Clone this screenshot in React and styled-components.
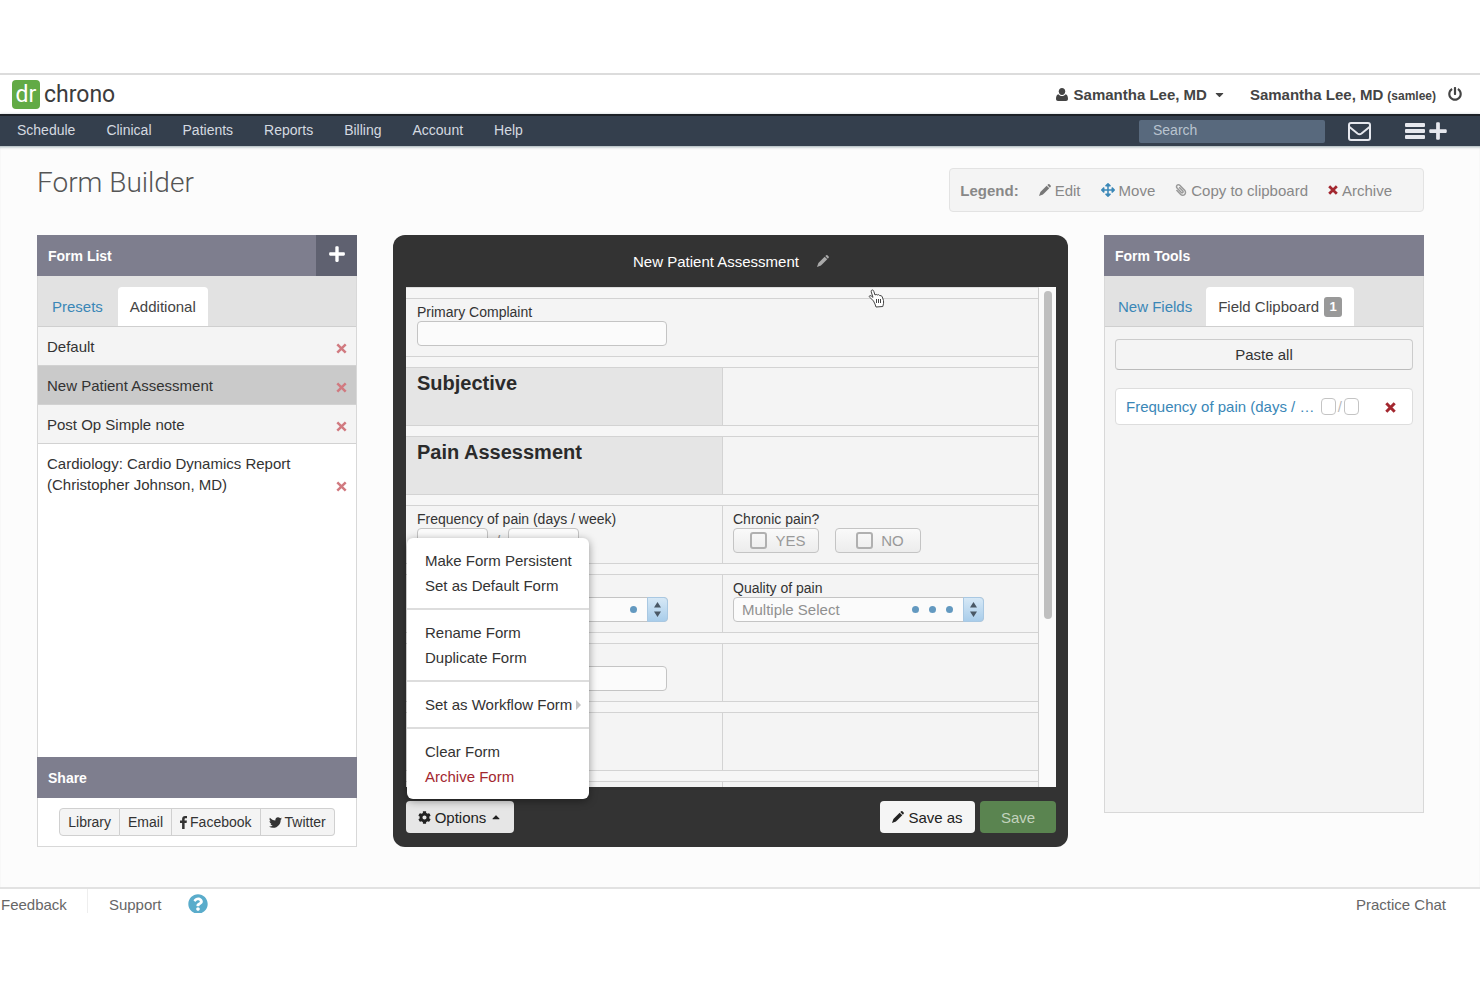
import React from 'react'
import styled, { createGlobalStyle, css } from 'styled-components'
import {
  FaArrowsAlt,
  FaCaretDown,
  FaCaretUp,
  FaCog,
  FaPaperclip,
  FaPlus,
  FaPowerOff,
  FaQuestionCircle,
  FaTwitter,
} from 'react-icons/fa'

const colors = {
  navy: '#343f4d',
  slate: '#7e7e8e',
  slateDark: '#5f6170',
  link: '#3a87b7',
  text: '#333333',
  muted: '#888888',
  danger: '#a3272f',
  green: '#5a8450',
  border: '#d8d8d8',
  light: '#f4f4f4',
}

const GlobalStyle = createGlobalStyle`
  * {
    box-sizing: border-box;
  }
  body {
    margin: 0;
    background: #ffffff;
    color: ${colors.text};
    font-family: 'Liberation Sans', Arial, sans-serif;
    font-size: 15px;
  }
  button, input, select {
    font-family: inherit;
    font-size: inherit;
    color: inherit;
    margin: 0;
  }
  a {
    color: inherit;
    text-decoration: none;
  }
`

const Page = styled.div`
  padding-top: 73px;
`

/* ---------- top bars ---------- */

const Header = styled.header`
  display: flex;
  align-items: center;
  justify-content: space-between;
  height: 41px;
  padding: 0 18px 0 12px;
  border-top: 2px solid #dcdcdc;
`

const Logo = styled.a`
  display: flex;
  align-items: center;
  gap: 4px;
  font-family: Roboto, sans-serif;
  font-size: 23px;
  line-height: 29px;
  color: #3c3c3c;
`

const LogoMark = styled.span`
  width: 28px;
  height: 29px;
  border-radius: 4px;
  background: #62aa45;
  color: #ffffff;
  text-align: center;
`

const UserArea = styled.div`
  display: flex;
  align-items: center;
  padding-bottom: 1px;
  font-weight: bold;
  color: #444444;
  gap: 24px;
`

const UserButton = styled.button`
  display: flex;
  align-items: center;
  gap: 6px;
  padding: 0;
  border: 0;
  background: none;
  font-weight: bold;
`

const UserName = styled.a`
  display: flex;
  align-items: baseline;
  gap: 4px;

  small {
    font-size: 12px;
  }
`

const PowerButton = styled.button`
  display: flex;
  margin-left: -12px;
  padding: 0;
  border: 0;
  background: none;
`

const Nav = styled.nav`
  display: flex;
  align-items: center;
  height: 32px;
  padding: 0 32px 0 17px;
  border-top: 2px solid #1d2127;
  background: ${colors.navy};
  box-shadow: 0 1px 3px rgba(60, 90, 100, 0.6);
  color: #d5dae0;
  font-size: 14px;
`

const NavLinks = styled.div`
  display: flex;
  flex: 1;
  gap: 31px;
  padding-bottom: 2px;
`

const Search = styled.input`
  width: 186px;
  height: 23px;
  padding: 0 14px 2px;
  border: 0;
  border-radius: 2px;
  background: #58697d;

  &::placeholder {
    color: #b9c4d0;
    opacity: 1;
  }
`

const NavIcon = styled.button`
  display: flex;
  align-items: center;
  gap: 3px;
  margin-left: ${({ $space }) => $space}px;
  padding: 0;
  border: 0;
  background: none;
  color: #e6e8ee;
`

/* ---------- page heading ---------- */

const Main = styled.main`
  position: relative;
  padding: 22px 56px 40px 37px;
  background: #fcfcfc;
  box-shadow: inset 0 3px 3px -2px rgba(60, 90, 100, 0.5);
`

const TitleRow = styled.div`
  display: flex;
  align-items: flex-start;
  justify-content: space-between;
  margin-bottom: 23px;
`

const Title = styled.h1`
  margin: 0;
  font-family: Roboto, sans-serif;
  font-size: 28px;
  font-weight: 300;
  line-height: 30px;
  color: #555555;
`

const Legend = styled.div`
  display: flex;
  align-items: center;
  gap: 20px;
  height: 44px;
  padding: 0 31px 0 10px;
  border: 1px solid #e3e3e3;
  border-radius: 4px;
  background: ${colors.light};
  color: ${colors.muted};
`

const LegendItem = styled.span`
  display: flex;
  align-items: center;
  gap: 4px;

  svg {
    color: ${({ $color }) => $color};
  }
`

const MirroredClip = styled(FaPaperclip)`
  transform: scaleX(-1);
`

/* ---------- panels ---------- */

const Columns = styled.div`
  display: grid;
  grid-template-columns: 320px 1fr 320px;
  gap: 36px;
  align-items: start;
`

const Panel = styled.section`
  display: flex;
  flex-direction: column;
  min-height: ${({ $height }) => $height}px;
  border: 1px solid ${colors.border};
  border-top: 0;
  background: ${({ $fill }) => $fill};
`

const PanelHeader = styled.div`
  display: flex;
  align-items: stretch;
  justify-content: space-between;
  height: 41px;
  margin: 0 -1px;
  padding-left: 11px;
  background: ${colors.slate};
  color: #ffffff;
`

const PanelTitle = styled.h2`
  margin: 0;
  font-size: 14px;
  line-height: 42px;
`

const AddButton = styled.button`
  display: flex;
  align-items: center;
  justify-content: center;
  width: 41px;
  padding: 0 0 3px;
  border: 0;
  background: ${colors.slateDark};
`

const Tabs = styled.div`
  display: flex;
  align-items: flex-end;
  gap: ${({ $gap }) => $gap}px;
  height: 51px;
  padding-left: ${({ $gap }) => $gap - 1}px;
  border-bottom: 1px solid #cfcfcf;
  background: #e2e2e2;
`

const Tab = styled.button`
  display: flex;
  align-items: center;
  gap: 5px;
  height: 39px;
  padding: 0 12px;
  border: 0;
  border-radius: 4px 4px 0 0;
  background: ${({ $active }) => ($active ? '#ffffff' : 'transparent')};
  color: ${({ $active }) => ($active ? '#444444' : colors.link)};
`

const Badge = styled.span`
  width: 18px;
  border-radius: 3px;
  background: #999999;
  color: #ffffff;
  font-size: 13px;
  font-weight: bold;
  line-height: 20px;
`

const FormItems = styled.ul`
  flex: 1;
  margin: 0;
  padding: 0;
  list-style: none;
`

const FormItem = styled.li`
  display: flex;
  align-items: flex-end;
  justify-content: space-between;
  padding: 9px 9px 8px;
  border-bottom: 1px solid ${({ $plain }) => ($plain ? 'transparent' : '#d2d2d2')};
  background: ${({ $selected, $plain }) =>
    $selected ? '#cacaca' : $plain ? '#ffffff' : colors.light};
  line-height: 21px;
`

const FormLink = styled.a`
  max-width: 260px;
`

const RemoveButton = styled.button`
  display: flex;
  padding: ${({ $strong }) => ($strong ? '2px 0 0' : '0 0 3px')};
  border: 0;
  background: none;
  color: ${({ $strong }) => ($strong ? colors.danger : '#d17a80')};
`

const ShareBody = styled.div`
  display: flex;
  justify-content: center;
  padding: 10px 0;
`

const ShareButton = styled.button`
  display: flex;
  align-items: center;
  gap: 3px;
  height: 28px;
  padding: 0 8px;
  border: 1px solid #d0d0d0;
  border-left-width: 0;
  background: ${colors.light};
  font-size: 14px;

  &:first-child {
    border-left-width: 1px;
    border-radius: 4px 0 0 4px;
  }
  &:last-child {
    border-radius: 0 4px 4px 0;
  }
`

const ToolsBody = styled.div`
  display: flex;
  flex-direction: column;
  gap: 18px;
  padding: 12px 10px;
`

const PasteButton = styled.button`
  height: 31px;
  border: 1px solid #cccccc;
  border-bottom-color: #bbbbbb;
  border-radius: 4px;
  background: ${colors.light};
`

const ClipItem = styled.div`
  display: flex;
  align-items: center;
  height: 37px;
  padding: 0 16px 0 10px;
  border: 1px solid #dddddd;
  border-radius: 4px;
  background: #ffffff;
  color: ${colors.link};

  a {
    flex: 1;
    white-space: nowrap;
  }
`

const ClipPreview = styled.span`
  display: flex;
  align-items: center;
  gap: 2px;
  margin-right: 26px;
  color: #bbbbbb;

  i {
    width: 15px;
    height: 17px;
    border: 1px solid #c4c4c4;
    border-radius: 4px;
  }
`

/* ---------- form editor ---------- */

const Editor = styled.section`
  position: relative;
  padding: 0 12px 14px 13px;
  border-radius: 12px;
  background: #333333;
`

const EditorTitle = styled.div`
  display: flex;
  align-items: center;
  justify-content: center;
  gap: 18px;
  height: 52px;
  color: #ffffff;

  h2 {
    margin: 0;
    font-size: 15px;
    font-weight: normal;
  }
  button {
    display: flex;
    padding: 0;
    border: 0;
    background: none;
    color: #aaaaaa;
  }
`

const Canvas = styled.div`
  display: flex;
  height: 500px;
  overflow: hidden;
  background: #fafafa;
`

const Rows = styled.div`
  display: flex;
  flex: 1;
  flex-direction: column;
  gap: 10px;
  padding-top: 10px;
  border-top: 1px solid #dddddd;
  border-right: 1px solid #cfcfcf;
  background: #f6f6f6;
`

const Row = styled.div`
  display: grid;
  flex: none;
  grid-template-columns: ${({ $single }) => ($single ? '1fr' : '1fr 1fr')};
  height: 59px;
  border-top: 1px solid #d3d3d3;
  border-bottom: 1px solid #d3d3d3;
  background: ${colors.light};
`

const Cell = styled.div`
  padding: ${({ $heading }) => ($heading ? '4px' : '5px')} 11px;
  background: ${({ $heading }) => ($heading ? '#e5e5e5' : 'transparent')};

  & + & {
    border-left: 1px solid #d3d3d3;
    padding-left: 10px;
  }
`

const Heading = styled.h3`
  margin: 0;
  font-size: 20px;
  line-height: 22px;
  color: #2b2b2b;
`

const Label = styled.label`
  display: block;
  height: 17px;
  font-size: 14px;
  line-height: 17px;
`

const fieldBox = css`
  height: 25px;
  border: 1px solid #c4c4c4;
  border-radius: 4px;
  background: #fbfbfb;
`

const TextInput = styled.input`
  ${fieldBox}
  width: ${({ $width }) => $width}px;
`

const Inline = styled.div`
  display: flex;
  align-items: center;
  gap: ${({ $gap }) => $gap}px;
  color: ${colors.muted};
`

const Choice = styled.label`
  ${fieldBox}
  display: flex;
  align-items: center;
  justify-content: center;
  gap: 8px;
  width: 86px;
  padding-left: 4px;
  background: linear-gradient(#fafafa, #ececec);
  color: #999999;

  input {
    appearance: none;
    width: 17px;
    height: 17px;
    border: 2px solid #b0b0b0;
    border-radius: 3px;
  }
`

const SelectWrap = styled.div`
  position: relative;
  width: 251px;
`

const Select = styled.select`
  ${fieldBox}
  display: block;
  appearance: none;
  width: 100%;
  padding: 0 8px;
  color: #909090;
`

const SelectEnd = styled.span`
  position: absolute;
  top: 0;
  right: 0;
  display: flex;
  align-items: center;
  pointer-events: none;
`

const Dots = styled.span`
  display: flex;
  gap: 10px;
  padding-right: 10px;

  i {
    width: 7px;
    height: 7px;
    border-radius: 50%;
    background: #6399c0;
  }
`

const Stepper = styled.span`
  display: flex;
  align-items: center;
  justify-content: center;
  width: 21px;
  height: 25px;
  border: 1px solid #a9c8e2;
  border-radius: 0 4px 4px 0;
  background: linear-gradient(#d6e8f6, #a9cdea);
`

const Track = styled.div`
  width: 17px;
  padding: 4px 4px 0 5px;
`

const Thumb = styled.div`
  height: 328px;
  border-radius: 4px;
  background: #bfbfbf;
`

const Pointer = styled.svg`
  position: absolute;
  top: 54px;
  left: 475px;
`

const EditorFooter = styled.div`
  display: flex;
  gap: 5px;
  padding-top: 14px;
`

const OptionsWrap = styled.div`
  position: relative;
  margin-right: auto;
`

const ActionButton = styled.button`
  display: flex;
  align-items: center;
  justify-content: center;
  gap: 4px;
  width: ${({ $width }) => $width}px;
  height: 32px;
  padding: 0;
  border: 0;
  border-radius: 4px;
  background: ${({ $fill }) => $fill || '#f5f5f5'};
  color: ${({ $ink }) => $ink || '#222222'};
`

const Menu = styled.div`
  position: absolute;
  bottom: 100%;
  left: 1px;
  width: 182px;
  margin-bottom: 2px;
  border-radius: 6px;
  background: #ffffff;
  box-shadow: 0 2px 8px rgba(0, 0, 0, 0.4);
`

const MenuGroup = styled.div`
  padding: 10px 0;

  & + & {
    border-top: 2px solid #dddddd;
  }
`

const MenuItem = styled.button`
  display: flex;
  align-items: center;
  gap: 4px;
  width: 100%;
  height: 25px;
  padding: 0 0 0 18px;
  border: 0;
  background: none;
  color: ${({ $danger }) => ($danger ? colors.danger : colors.text)};
  white-space: nowrap;
`

/* ---------- footer ---------- */

const Footer = styled.footer`
  display: flex;
  height: 26px;
  padding-right: 34px;
  overflow: hidden;
  border-top: 2px solid #e2e2e2;
  background: #ffffff;
  color: #666666;
  line-height: 32px;
`

const FooterLink = styled.a`
  padding: ${({ $pad }) => $pad};
  border-right: ${({ $divided }) => ($divided ? '1px solid #eeeeee' : '0')};
`

const HelpLink = styled.a`
  flex: 1;
  padding-top: 5px;
  line-height: 0;
  color: #5aaccb;
`

const navLinks = ['Schedule', 'Clinical', 'Patients', 'Reports', 'Billing', 'Account', 'Help']

const forms = [
  { name: 'Default' },
  { name: 'New Patient Assessment', selected: true },
  { name: 'Post Op Simple note' },
  { name: 'Cardiology: Cardio Dynamics Report (Christopher Johnson, MD)', plain: true },
]

const menuGroups = [
  [{ text: 'Make Form Persistent' }, { text: 'Set as Default Form' }],
  [{ text: 'Rename Form' }, { text: 'Duplicate Form' }],
  [{ text: 'Set as Workflow Form', submenu: true }],
  [{ text: 'Clear Form' }, { text: 'Archive Form', danger: true }],
]

/* ---------- icons ---------- */

const Person = () => (
  <svg width="12" height="13" viewBox="0 0 12 13" fill="currentColor">
    <path d="M6 0 C8 0 9.2 1.3 9.2 3.2 C9.2 5.2 8 7 6 7 C4 7 2.8 5.2 2.8 3.2 C2.8 1.3 4 0 6 0 Z" />
    <path d="M2.4 6.2 C3.3 7.4 4.5 8 6 8 C7.5 8 8.7 7.4 9.6 6.2 C11.3 6.6 12 8.3 12 10.8 C12 12.2 11.2 13 10 13 H2 C0.8 13 0 12.2 0 10.8 C0 8.3 0.7 6.6 2.4 6.2 Z" />
  </svg>
)

const Pencil = () => (
  <svg width="12" height="12" viewBox="0 0 13 13" fill="currentColor">
    <path d="M9 1.2 L10 0.3 Q10.7 -0.2 11.3 0.4 L12.6 1.7 Q13.2 2.4 12.6 3 L11.8 4 Z" />
    <path d="M8.3 1.9 L11.1 4.7 L4.3 11.5 L0 13 L1.5 8.7 Z" />
  </svg>
)

const Cross = ({ size = 11, weight = 3 }) => (
  <svg width={size} height={size} viewBox="0 0 11 11" stroke="currentColor" strokeWidth={weight}>
    <path d="M1.3 1.3 L9.7 9.7 M9.7 1.3 L1.3 9.7" />
  </svg>
)

const Bars = () => (
  <svg width="20" height="16" viewBox="0 0 20 16" fill="currentColor">
    <rect width="20" height="4" rx="1" />
    <rect y="6" width="20" height="4" rx="1" />
    <rect y="12" width="20" height="4" rx="1" />
  </svg>
)

const Facebook = () => (
  <svg width="7" height="13" viewBox="0 0 7 13" fill="currentColor">
    <path d="M7 0.1 V2.2 H5.7 C4.8 2.2 4.6 2.7 4.6 3.3 V4.6 H6.9 L6.6 7 H4.6 V13 H2.1 V7 H0 V4.6 H2.1 V2.9 C2.1 1 3.3 0 5.1 0 Z" />
  </svg>
)

const SubmenuArrow = () => (
  <svg width="5" height="10" viewBox="0 0 5 10" fill="#c4c4c4">
    <path d="M0 0 L5 5 L0 10 Z" />
  </svg>
)

const Envelope = () => (
  <svg width="23" height="19" viewBox="0 0 23 19" fill="none" stroke="currentColor" strokeWidth="2">
    <rect x="1" y="1" width="21" height="17" rx="2" />
    <path d="M1.5 5 L9.5 11.5 Q11.5 13 13.5 11.5 L21.5 5" />
  </svg>
)

const Hand = () => (
  <Pointer
    width="17"
    height="19"
    viewBox="0 0 17 19"
    fill="#ffffff"
    stroke="#444444"
    strokeLinejoin="round"
  >
    <path d="M5.5 12 L2 8.5 Q0.5 7 1.8 6.6 Q3 6.4 5 8.4 L3.2 2.8 Q3 1 4.3 0.9 Q5.4 1 5.8 2.4 L7 6 Q8.2 4.8 9.3 6 Q10.8 5 11.7 6.6 Q13.6 6 14.3 8 L15.5 11.5 Q16 14 14.8 17.5 L8 18 Q7.2 15 5.5 12 Z" />
    <path d="M8.5 10 V14 M10.5 10 V14 M12.5 10 V14" />
  </Pointer>
)

const SelectField = ({ id, label, dots, children }) => (
  <SelectWrap>
    <Select id={id} aria-label={label}>
      {children}
    </Select>
    <SelectEnd>
      <Dots>
        {Array.from({ length: dots }, (_, i) => (
          <i key={i} />
        ))}
      </Dots>
      <Stepper>
        <svg width="7" height="15" viewBox="0 0 7 15" fill="#4a5865">
          <path d="M3.5 0 L7 5.5 H0 Z M0 9.5 H7 L3.5 15 Z" />
        </svg>
      </Stepper>
    </SelectEnd>
  </SelectWrap>
)

const TopBars = () => (
  <>
    <Header>
      <Logo href="#">
        <LogoMark>dr</LogoMark>
        chrono
      </Logo>
      <UserArea>
        <UserButton>
          <Person />
          Samantha Lee, MD
          <FaCaretDown size={13} />
        </UserButton>
        <UserName href="#">
          Samantha Lee, MD <small>(samlee)</small>
        </UserName>
        <PowerButton aria-label="Log out">
          <FaPowerOff size={14} />
        </PowerButton>
      </UserArea>
    </Header>
    <Nav>
      <NavLinks>
        {navLinks.map((link) => (
          <a href="#" key={link}>
            {link}
          </a>
        ))}
      </NavLinks>
      <Search type="search" placeholder="Search" aria-label="Search" />
      <NavIcon $space={23} aria-label="Messages">
        <Envelope />
      </NavIcon>
      <NavIcon $space={34} aria-label="Add">
        <Bars />
        <FaPlus size={20} />
      </NavIcon>
    </Nav>
  </>
)

const FormList = () => (
  <Panel $height={612} $fill="#ffffff">
    <PanelHeader>
      <PanelTitle>Form List</PanelTitle>
      <AddButton aria-label="Add form">
        <FaPlus size={18} />
      </AddButton>
    </PanelHeader>
    <Tabs $gap={3}>
      <Tab>Presets</Tab>
      <Tab $active>Additional</Tab>
    </Tabs>
    <FormItems>
      {forms.map(({ name, selected, plain }) => (
        <FormItem key={name} $selected={selected} $plain={plain}>
          <FormLink href="#">{name}</FormLink>
          <RemoveButton aria-label={`Archive ${name}`}>
            <Cross weight={2.5} />
          </RemoveButton>
        </FormItem>
      ))}
    </FormItems>
    <PanelHeader>
      <PanelTitle>Share</PanelTitle>
    </PanelHeader>
    <ShareBody>
      <ShareButton>Library</ShareButton>
      <ShareButton>Email</ShareButton>
      <ShareButton>
        <Facebook />
        Facebook
      </ShareButton>
      <ShareButton>
        <FaTwitter size={13} />
        Twitter
      </ShareButton>
    </ShareBody>
  </Panel>
)

const OptionsMenu = () => (
  <Menu>
    {menuGroups.map((items, i) => (
      <MenuGroup key={i}>
        {items.map(({ text, danger, submenu }) => (
          <MenuItem key={text} $danger={danger}>
            {text}
            {submenu && <SubmenuArrow />}
          </MenuItem>
        ))}
      </MenuGroup>
    ))}
  </Menu>
)

const FormEditor = () => (
  <Editor>
    <EditorTitle>
      <h2>New Patient Assessment</h2>
      <button aria-label="Rename">
        <Pencil />
      </button>
    </EditorTitle>
    <Canvas>
      <Rows>
        <Row $single>
          <Cell>
            <Label htmlFor="complaint">Primary Complaint</Label>
            <TextInput id="complaint" $width={250} />
          </Cell>
        </Row>
        <Row>
          <Cell $heading>
            <Heading>Subjective</Heading>
          </Cell>
          <Cell />
        </Row>
        <Row>
          <Cell $heading>
            <Heading>Pain Assessment</Heading>
          </Cell>
          <Cell />
        </Row>
        <Row>
          <Cell>
            <Label htmlFor="days">Frequency of pain (days / week)</Label>
            <Inline $gap={8}>
              <TextInput id="days" $width={71} />
              /
              <TextInput aria-label="Weeks" $width={71} />
            </Inline>
          </Cell>
          <Cell>
            <Label as="div">Chronic pain?</Label>
            <Inline $gap={16}>
              <Choice>
                <input type="checkbox" />
                YES
              </Choice>
              <Choice>
                <input type="checkbox" />
                NO
              </Choice>
            </Inline>
          </Cell>
        </Row>
        <Row>
          <Cell>
            <Label as="div" />
            <SelectField label="Single select" dots={1} />
          </Cell>
          <Cell>
            <Label htmlFor="quality">Quality of pain</Label>
            <SelectField id="quality" dots={3}>
              <option>Multiple Select</option>
            </SelectField>
          </Cell>
        </Row>
        <Row>
          <Cell>
            <Label as="div" />
            <TextInput aria-label="Text field" $width={250} />
          </Cell>
          <Cell />
        </Row>
        <Row>
          <Cell />
          <Cell />
        </Row>
        <Row>
          <Cell />
          <Cell />
        </Row>
      </Rows>
      <Track>
        <Thumb />
      </Track>
    </Canvas>
    <EditorFooter>
      <OptionsWrap>
        <ActionButton $width={108} $fill="#e6e6e6">
          <FaCog size={13} />
          Options
          <FaCaretUp size={12} />
        </ActionButton>
        <OptionsMenu />
      </OptionsWrap>
      <ActionButton $width={95}>
        <Pencil />
        Save as
      </ActionButton>
      <ActionButton $width={76} $fill={colors.green} $ink="#c2d2bd">
        Save
      </ActionButton>
    </EditorFooter>
    <Hand />
  </Editor>
)

const FormTools = () => (
  <Panel $height={578} $fill={colors.light}>
    <PanelHeader>
      <PanelTitle>Form Tools</PanelTitle>
    </PanelHeader>
    <Tabs $gap={2}>
      <Tab>New Fields</Tab>
      <Tab $active>
        Field Clipboard <Badge>1</Badge>
      </Tab>
    </Tabs>
    <ToolsBody>
      <PasteButton>Paste all</PasteButton>
      <ClipItem>
        <a href="#">Frequency of pain (days / …</a>
        <ClipPreview>
          <i />/<i />
        </ClipPreview>
        <RemoveButton $strong aria-label="Remove from clipboard">
          <Cross />
        </RemoveButton>
      </ClipItem>
    </ToolsBody>
  </Panel>
)

const App = () => (
  <Page>
    <GlobalStyle />
    <TopBars />
    <Main>
      <TitleRow>
        <Title>Form Builder</Title>
        <Legend>
          <strong>Legend:</strong>
          <LegendItem $color="#777777">
            <Pencil />
            Edit
          </LegendItem>
          <LegendItem $color={colors.link}>
            <FaArrowsAlt size={14} />
            Move
          </LegendItem>
          <LegendItem $color="#999999">
            <MirroredClip size={12} />
            Copy to clipboard
          </LegendItem>
          <LegendItem $color={colors.danger}>
            <Cross size={10} />
            Archive
          </LegendItem>
        </Legend>
      </TitleRow>
      <Columns>
        <FormList />
        <FormEditor />
        <FormTools />
      </Columns>
    </Main>
    <Footer>
      <FooterLink href="#" $pad="0 20px 0 1px" $divided>
        Feedback
      </FooterLink>
      <FooterLink href="#" $pad="0 27px 0 21px">
        Support
      </FooterLink>
      <HelpLink href="#" aria-label="Help">
        <FaQuestionCircle size={20} />
      </HelpLink>
      <FooterLink href="#" $pad="0">
        Practice Chat
      </FooterLink>
    </Footer>
  </Page>
)

export default App
